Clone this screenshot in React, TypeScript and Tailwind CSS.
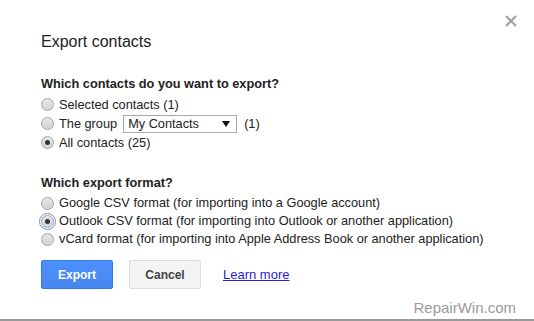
function Radio({ checked = false, focused = false }: { checked?: boolean; focused?: boolean }) {
  return (
    <span
      className={`relative inline-flex items-center justify-center w-[13px] h-[13px] rounded-full border border-[#a3a3a3] bg-gradient-to-b from-[#e6e6e6] to-[#d4d4d4] shrink-0 ${
        focused ? "outline outline-1 outline-[#6b8fc9] outline-offset-[1px]" : ""
      }`}
    >
      {checked && <span className="w-[5px] h-[5px] rounded-full bg-[#333]" />}
    </span>
  );
}

function Row({ children, checked, focused, h = "h-[19px]" }: { children: React.ReactNode; checked?: boolean; focused?: boolean; h?: string }) {
  return (
    <div className={`flex items-center gap-[5px] ${h}`}>
      <Radio checked={checked} focused={focused} />
      <span className="flex items-center">{children}</span>
    </div>
  );
}

export default function App() {
  return (
    <div className="relative w-[534px] h-[321px] bg-white overflow-hidden text-[12.75px] text-[#222] font-['Liberation_Sans',Arial,sans-serif]">
      <button className="absolute right-[17px] top-[15px]">
        <svg width="12" height="12" viewBox="0 0 12 12">
          <path d="M1 1 L11 11 M11 1 L1 11" stroke="#a0a0a0" strokeWidth="2.2" />
        </svg>
      </button>

      <div className="pl-[41px] pt-[32px]">
        <h1 className="text-[16px] leading-[20px] text-[#222]">Export contacts</h1>

        <h2 className="mt-[24px] font-bold leading-[16px]">Which contacts do you want to export?</h2>
        <div className="mt-[3px]">
          <Row>Selected contacts (1)</Row>
          <Row>
            The group
            <span className="ml-[6px] flex items-center justify-between w-[114px] h-[18px] border border-[#a9a9a9] pl-[4px] pr-[6px] text-[#222]">
              My Contacts
              <svg width="8" height="6" viewBox="0 0 8 6">
                <path d="M0 0 H8 L4 6 Z" fill="#111" />
              </svg>
            </span>
            <span className="ml-[7px]">(1)</span>
          </Row>
          <Row checked>All contacts (25)</Row>
        </div>

        <h2 className="mt-[23px] font-bold leading-[16px]">Which export format?</h2>
        <div className="mt-[3px]">
          <Row h="h-[18px]">Google CSV format (for importing into a Google account)</Row>
          <Row h="h-[18px]" checked focused>
            Outlook CSV format (for importing into Outlook or another application)
          </Row>
          <Row h="h-[18px]">vCard format (for importing into Apple Address Book or another application)</Row>
        </div>

        <div className="mt-[12px] flex items-center">
          <button className="w-[72px] h-[29px] rounded-[2px] border border-[#3079ed] bg-gradient-to-b from-[#4d90fe] to-[#4787ed] text-white font-bold text-[12px]">
            Export
          </button>
          <button className="ml-[16px] w-[72px] h-[29px] rounded-[2px] border border-[#dcdcdc] bg-[#f3f3f3] text-[#444] font-bold text-[12px]">
            Cancel
          </button>
          <a className="ml-[22px] text-[#2a1ddb] underline text-[13px]">Learn more</a>
        </div>
      </div>

      <div className="absolute right-[18px] bottom-[2px] text-[15px] text-[#9a9a9a]">RepairWin.com</div>
      <div className="absolute left-0 right-0 bottom-0 h-[2px] bg-[#999]" />
    </div>
  );
}
